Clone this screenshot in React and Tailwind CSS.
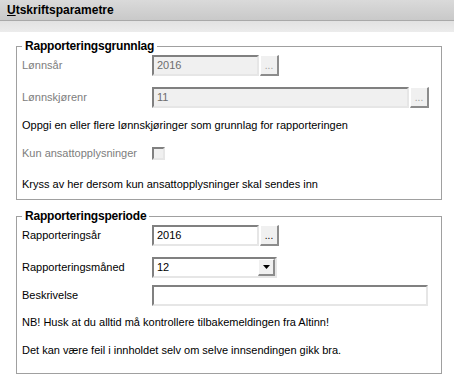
const inset = 'border-2 border-t-[#808080] border-l-[#808080] border-b-[#e6e6e6] border-r-[#e6e6e6]';
const outset = 'border border-t-white border-l-white border-r-2 border-b-2 border-r-[#8c8c8c] border-b-[#8c8c8c] bg-[#f0f0f0]';

function TextBox({ value = '', width, disabled }) {
  return (
    <div
      className={`h-[21px] ${width} ${inset} flex items-center pl-[3px] text-[11px] ${
        disabled ? 'bg-[#f0f0f0] text-[#6d6d6d]' : 'bg-white text-black'
      }`}
    >
      {value}
    </div>
  );
}

function DotsButton({ disabled }) {
  return (
    <div
      className={`ml-[1px] h-[21px] w-[19px] ${outset} flex items-end justify-center pb-[3px] text-[10px] leading-none ${
        disabled ? 'text-[#a0a0a0]' : 'text-black'
      }`}
    >
      ...
    </div>
  );
}

function Row({ label, disabled, className = '', children }) {
  return (
    <div className={`flex items-center ${className}`}>
      <div className={`w-[130px] text-[11px] ${disabled ? 'text-[#7d7d7d]' : 'text-black'}`}>{label}</div>
      {children}
    </div>
  );
}

function Group({ title, className = '', children }) {
  return (
    <fieldset className={`mx-[16px] w-[426px] border border-[#a0a0a0] px-[5px] ${className}`}>
      <legend className="px-[3px] text-[12px] font-bold leading-[14px] tracking-[-0.2px] text-black">{title}</legend>
      {children}
    </fieldset>
  );
}

export default function App() {
  return (
    <div className="h-[378px] w-[454px] overflow-hidden bg-white font-['Liberation_Sans',Arial,sans-serif] text-black">
      <div className="h-[20px] bg-gradient-to-b from-[#dadada] to-[#c9c9c9] pl-[7px] text-[12px] font-bold leading-[20px]">
        <span className="underline">U</span>tskriftsparametre
      </div>
      <div className="h-px bg-[#a9a9a9]" />
      <div className="h-[11px] bg-gradient-to-b from-[#e2e2e2] to-[#ececec]" />

      <Group title="Rapporteringsgrunnlag" className="mt-[7px] pb-[8px]">
        <Row label="Lønnsår" disabled className="mt-[2px]">
          <TextBox value="2016" width="w-[107px]" disabled />
          <DotsButton disabled />
        </Row>
        <Row label="Lønnskjørenr" disabled className="mt-[11px]">
          <TextBox value="11" width="w-[257px]" disabled />
          <DotsButton disabled />
        </Row>
        <p className="mt-[10px] text-[11px] leading-[14px]">
          Oppgi en eller flere lønnskjøringer som grunnlag for rapporteringen
        </p>
        <Row label="Kun ansattopplysninger" disabled className="mt-[15px] h-[13px]">
          <div className={`h-[13px] w-[13px] ${inset} bg-[#f0f0f0]`} />
        </Row>
        <p className="mt-[17px] text-[11px] leading-[14px]">
          Kryss av her dersom kun ansattopplysninger skal sendes inn
        </p>
      </Group>

      <Group title="Rapporteringsperiode" className="mt-[9px] pb-[16px]">
        <Row label="Rapporteringsår" className="mt-[2px]">
          <TextBox value="2016" width="w-[107px]" />
          <DotsButton />
        </Row>
        <Row label="Rapporteringsmåned" className="mt-[11px]">
          <div className={`flex h-[21px] w-[125px] items-center bg-white ${inset} text-[11px]`}>
            <span className="flex-1 pl-[3px]">12</span>
            <div className={`h-[17px] w-[17px] ${outset} flex items-center justify-center`}>
              <svg width="7" height="4" viewBox="0 0 7 4">
                <path d="M0 0h7L3.5 4z" fill="#000" />
              </svg>
            </div>
          </div>
        </Row>
        <Row label="Beskrivelse" className="mt-[7px]">
          <TextBox width="w-[276px]" />
        </Row>
        <p className="mt-[9px] text-[11px] leading-[14px]">
          NB! Husk at du alltid må kontrollere tilbakemeldingen fra Altinn!
        </p>
        <p className="mt-[14px] text-[11px] leading-[14px]">
          Det kan være feil i innholdet selv om selve innsendingen gikk bra.
        </p>
      </Group>
    </div>
  );
}
